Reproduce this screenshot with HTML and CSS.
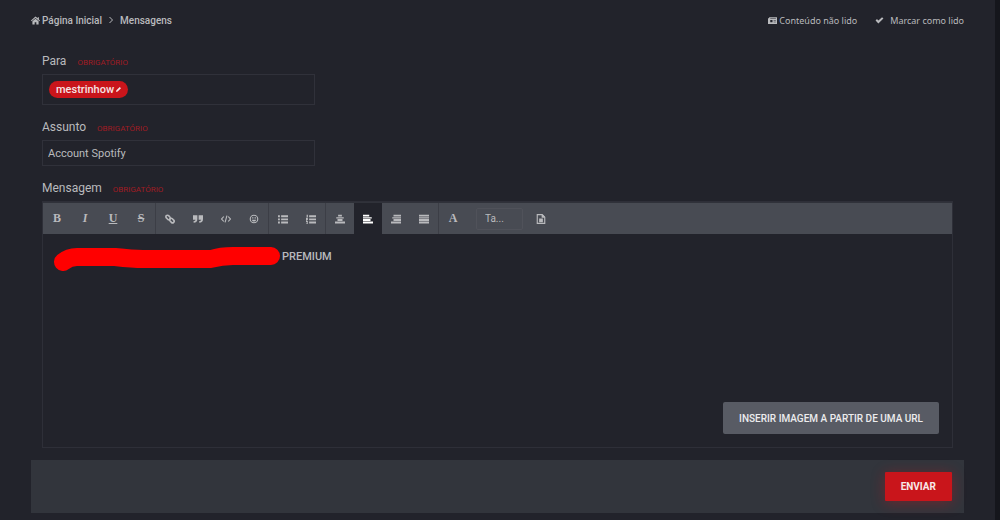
FILE: index.html
```html
<!DOCTYPE html>
<html lang="pt-BR">

<head>
    <meta charset="UTF-8">
    <meta name="viewport" content="width=device-width, initial-scale=1.0">
    <title>Mensagens</title>
    <link rel="stylesheet" href="styles.css">
</head>

<body>
    <main class="page">
        <header class="top_bar">
            <nav class="breadcrumb">
                <a href="#"><svg class="icon" viewBox="0 0 16 16"><path d="M8 1L0 8l1 1.500 7-6 7 6 1-1.500-2-2V2h-2v2zM8 5L2.500 9.500V15H6.500v-4h3v4h4V9.500z" /></svg>Página Inicial</a>
                <svg class="chevron" viewBox="0 0 6 8"><path d="M1.500 1l3 3-3 3" /></svg>
                <a href="#">Mensagens</a>
            </nav>
            <nav class="top_links">
                <a href="#"><svg class="icon" viewBox="0 0 16 16"><path fill-rule="evenodd" d="M2 2h14v12H0V4h2zM4 4v1h10V4zM4 7v4h4V7zM10 7v1h4V7zM10 10v1h4v-1z" /></svg>Conteúdo não lido</a>
                <a href="#" class="mark_read"><svg class="icon" viewBox="0 0 16 16"><path d="M1 8l2.500-2.500L6 8l6.500-6L15 4.500 6 13.500z" /></svg>Marcar como lido</a>
            </nav>
        </header>

        <form class="message_form">
            <div class="fields">
                <div class="form_group">
                    <div class="label_row">
                        <label for="to">Para</label>
                        <span class="required">OBRIGATÓRIO</span>
                    </div>
                    <div class="token_box">
                        <button type="button" class="token">mestrinhow
                            <svg class="pencil" viewBox="0 0 6 6"><path d="M0 6l.5-2L4.500 0 6 1.500 2 5.500z" /></svg>
                        </button>
                        <input type="text" id="to" class="token_input">
                    </div>
                </div>

                <div class="form_group">
                    <div class="label_row">
                        <label for="subject">Assunto</label>
                        <span class="required">OBRIGATÓRIO</span>
                    </div>
                    <input type="text" id="subject" class="form_control" value="Account Spotify">
                </div>

                <div class="form_group">
                    <div class="label_row">
                        <span class="label" id="message_label">Mensagem</span>
                        <span class="required">OBRIGATÓRIO</span>
                    </div>
                    <div class="editor">
                        <div class="toolbar">
                            <div class="tool_group">
                                <button type="button" class="tool serif" aria-label="Negrito">B</button>
                                <button type="button" class="tool serif italic" aria-label="Itálico">I</button>
                                <button type="button" class="tool serif underline" aria-label="Sublinhado">U</button>
                                <button type="button" class="tool serif strike" aria-label="Tachado">S</button>
                            </div>
                            <div class="tool_group">
                                <button type="button" class="tool" aria-label="Link"><svg viewBox="0 0 16 16"><g fill="none" stroke="currentColor" stroke-width="2.600"><rect x="1" y="3" width="8" height="5" rx="2.500" transform="rotate(45 5 5.500)" /><rect x="7" y="8" width="8" height="5" rx="2.500" transform="rotate(45 11 10.500)" /></g></svg></button>
                                <button type="button" class="tool" aria-label="Citação"><svg viewBox="0 0 16 16"><path d="M0 2h7v6c0 4-2 6-6 6v-3c2 0 3-1 3-2H0zM9 2h7v6c0 4-2 6-6 6v-3c2 0 3-1 3-2H9z" /></svg></button>
                                <button type="button" class="tool" aria-label="Código"><svg viewBox="0 0 16 16"><path d="M4.500 4L1 8l3.500 4M11.500 4L15 8l-3.500 4M9.500 2.500l-3 11" fill="none" stroke="currentColor" stroke-width="1.800" /></svg></button>
                                <button type="button" class="tool" aria-label="Emoticons"><svg viewBox="0 0 16 16"><circle cx="8" cy="8" r="6" fill="none" stroke="currentColor" stroke-width="1.800" /><path d="M5 5h2v2H5zM9 5h2v2H9zM4.500 9h7c-1 4-6 4-7 0z" /></svg></button>
                            </div>
                            <div class="tool_group">
                                <button type="button" class="tool" aria-label="Lista"><svg viewBox="0 0 16 16"><path d="M0 2h3v3H0zM0 7h3v3H0zM0 12h3v3H0zM5 2h11v3H5zM5 7h11v3H5zM5 12h11v3H5z" /></svg></button>
                                <button type="button" class="tool" aria-label="Lista numerada"><svg viewBox="0 0 16 16"><path d="M1 1h2v4H1zM0 6h3v4H1v1h2v5H0v-1h2v-2H0zM5 2h11v3H5zM5 7h11v3H5zM5 12h11v3H5z" /></svg></button>
                            </div>
                            <div class="tool_group">
                                <button type="button" class="tool" aria-label="Centralizar"><svg viewBox="0 0 16 16"><path d="M5 1h6v3H5zM2 5h12v2H2zM4 8h8v3H4zM0 12h16v3H0z" /></svg></button>
                                <button type="button" class="tool active" aria-label="Alinhar à esquerda"><svg viewBox="0 0 16 16"><path d="M0 1h10v3H0zM0 5h14v2H0zM0 8h12v3H0zM0 12h16v3H0z" /></svg></button>
                                <button type="button" class="tool" aria-label="Alinhar à direita"><svg viewBox="0 0 16 16"><path d="M4 1h12v3H4zM2 5h14v2H2zM4 8h12v3H4zM0 12h16v3H0z" /></svg></button>
                                <button type="button" class="tool" aria-label="Justificar"><svg viewBox="0 0 16 16"><path d="M0 1h16v3H0zM0 5h16v2H0zM0 8h16v3H0zM0 12h16v3H0z" /></svg></button>
                            </div>
                            <div class="tool_group last">
                                <button type="button" class="tool serif" aria-label="Cor do texto">A</button>
                                <select class="size_select" aria-label="Tamanho">
                                    <option>Ta...</option>
                                </select>
                                <button type="button" class="tool" aria-label="Visualizar"><svg viewBox="0 0 16 16"><path d="M2 1h8l4 4v10H2z" fill="none" stroke="currentColor" stroke-width="1.800" /><path d="M9 1h2l3 3v2H9zM5 7h6v6H5z" /></svg></button>
                            </div>
                        </div>
                        <div class="editor_body" contenteditable="true" role="textbox" aria-labelledby="message_label">
                            <!-- censored part of the message -->
                            <svg class="scribble" viewBox="0 0 228 24"><path d="M10 15Q16 10 24 10H62Q80 12 90 12H158Q168 9 180 9H218" /></svg><span>PREMIUM</span>
                        </div>
                        <div class="editor_footer">
                            <button type="button" class="url_btn">INSERIR IMAGEM A PARTIR DE UMA URL</button>
                        </div>
                    </div>
                </div>
            </div>

            <div class="submit">
                <button type="submit" class="submit_btn">ENVIAR</button>
            </div>
        </form>
    </main>
    <div class="scroll_track"></div>
</body>

</html>
```
FILE: styles.css
```css
* {
    box-sizing: border-box;
}

body {
    margin: 0;
    display: flex;
    min-height: 100vh;
    background-color: #22232b;
    color: #b9babd;
    font-family: Roboto, "Liberation Sans", sans-serif;
    font-size: 12px;
}

button,
input,
select {
    font-family: inherit;
    color: inherit;
}

button {
    border: none;
    padding: 0;
}

a {
    color: inherit;
    text-decoration: none;
}

svg {
    fill: currentColor;
}

.page {
    flex: 1;
    padding: 12px 31px 7px 31px;
}

.scroll_track {
    width: 5px;
    background-color: #15161c;
}

/* top bar */
.top_bar {
    display: flex;
    justify-content: space-between;
    height: 16px;
    font-family: "Noto Sans", sans-serif;
    font-size: 9px;
}

.breadcrumb,
.top_links,
.top_bar a {
    display: flex;
    align-items: center;
}

.breadcrumb {
    gap: 6px;
    font-family: Roboto, sans-serif;
    font-size: 10px;
    font-weight: 500;
}

.top_links {
    gap: 18px;
}

.top_bar a {
    gap: 2px;
}

.top_bar .mark_read {
    gap: 6px;
}

.icon {
    width: 9px;
    height: 9px;
}

.chevron {
    width: 6px;
    height: 8px;
    fill: none;
    stroke: currentColor;
}

/* form */
.fields {
    display: flex;
    flex-direction: column;
    gap: 14px;
    padding: 25px 11px 12px 11px;
}

.label_row {
    display: flex;
    align-items: center;
    gap: 11px;
    height: 16px;
    margin-bottom: 5px;
}

.required {
    padding-top: 2px;
    font-size: 8px;
    font-weight: 400;
    color: #a01c24;
}

.token_box,
.form_control {
    width: 30%;
    border: 1px solid #30313a;
    background-color: #22232b;
}

.token_box {
    display: flex;
    align-items: center;
    height: 31px;
    padding: 0 6px;
}

.token {
    display: flex;
    align-items: center;
    gap: 2px;
    height: 17px;
    padding: 0 7px;
    border-radius: 9px;
    background-color: #c9151b;
    color: #f5e4e5;
    font-size: 11px;
    font-weight: 500;
}

.pencil {
    width: 5px;
    height: 5px;
}

.token_input {
    flex: 1;
    min-width: 0;
    border: none;
    outline: none;
    background: none;
}

.form_control {
    display: block;
    height: 26px;
    padding: 0 5px;
    font-size: 11px;
}

/* editor */
.editor {
    display: flex;
    flex-direction: column;
    border: 1px solid #2e2f38;
}

.toolbar {
    display: flex;
    height: 32px;
    border-top: 1px solid #30323a;
    background-color: #484b53;
}

.tool_group {
    display: flex;
    align-items: center;
    border-right: 1px solid #3c3e46;
}

.last {
    border-right: none;
}

.tool {
    display: flex;
    align-items: center;
    justify-content: center;
    width: 28px;
    height: 100%;
    background: none;
}

.tool svg {
    width: 10px;
    height: 10px;
}

.serif {
    font-family: "Liberation Serif", serif;
    font-size: 12px;
    font-weight: 700;
}

.italic {
    font-style: italic;
}

.underline {
    text-decoration: underline;
}

.strike {
    text-decoration: line-through;
}

.active {
    background-color: #22232b;
    color: #ffffff;
}

.size_select {
    width: 47px;
    height: 22px;
    margin: 0 4px 0 9px;
    padding: 0 8px;
    appearance: none;
    border: 1px solid #50525a;
    border-radius: 2px;
    background: none;
    font-size: 10px;
}

.editor_body {
    display: flex;
    align-items: flex-start;
    gap: 1px;
    min-height: 168px;
    padding: 13px 10px;
    font-size: 11px;
    font-weight: 500;
    line-height: 20px;
    outline: none;
}

.scribble {
    width: 228px;
    height: 24px;
    fill: none;
    stroke: #ff0000;
    stroke-width: 18px;
    stroke-linecap: round;
    stroke-linejoin: round;
}

.editor_footer {
    display: flex;
    justify-content: flex-end;
    padding: 0 13px 13px 13px;
}

.url_btn {
    height: 32px;
    padding: 0 16px;
    border-radius: 2px;
    background-color: #585b64;
    color: #ececee;
    font-size: 10px;
    font-weight: 500;
}

.submit {
    display: flex;
    justify-content: flex-end;
    padding: 12px;
    background-color: #32353c;
}

.submit_btn {
    height: 29px;
    padding: 0 16px;
    border-radius: 1px;
    background-color: #c9151b;
    color: #f8e8e8;
    font-size: 10px;
    font-weight: 700;
    box-shadow: 0 2px 14px rgba(201, 21, 27, 0.4);
}
```
